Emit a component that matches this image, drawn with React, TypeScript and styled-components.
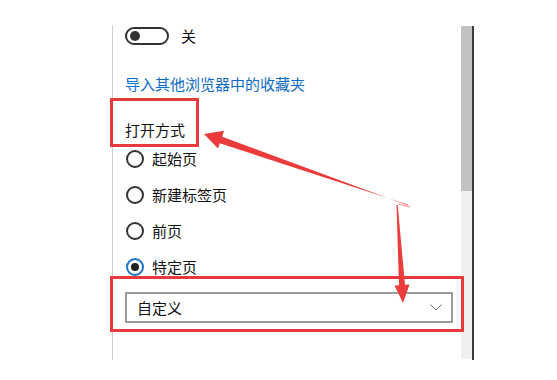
import React from "react";
import styled, { createGlobalStyle } from "styled-components";

const Global = createGlobalStyle`
  html, body { margin: 0; padding: 0; background: #ffffff; }
  body { font-family: "Noto Sans CJK SC", "Microsoft YaHei", sans-serif; color: #000; }
`;

const Page = styled.div`
  position: relative;
  width: 557px;
  height: 380px;
  overflow: hidden;
  background: #fff;
`;

const Layout = styled.div`
  display: flex;
  align-items: flex-start;
  padding: 25px 0 0 112px;
`;

const Panel = styled.div`
  box-sizing: border-box;
  width: 349px;
  height: 335px;
  border-left: 1px solid #cfcfcf;
  padding-left: 12px;
  display: flex;
  flex-direction: column;
`;

const ToggleRow = styled.div`
  display: flex;
  align-items: center;
  margin-top: 2px;
  height: 18px;
`;

const Toggle = styled.div`
  box-sizing: border-box;
  width: 44px;
  height: 18px;
  border: 2px solid #333;
  border-radius: 9px;
  display: flex;
  align-items: center;
  padding-left: 3px;
`;

const Knob = styled.div`
  width: 10px;
  height: 10px;
  border-radius: 50%;
  background: #333;
`;

const Text = styled.span`
  font-size: 15px;
  line-height: 20px;
  color: #111;
  white-space: nowrap;
`;

const ToggleLabel = styled(Text)`
  margin-left: 12px;
`;

const Link = styled.div`
  margin-top: 29px;
  font-size: 15px;
  line-height: 20px;
  color: #0a6cc4;
  white-space: nowrap;
`;

const Heading = styled.div`
  margin-top: 26px;
  font-size: 15px;
  line-height: 20px;
  color: #111;
`;

const RadioGroup = styled.div`
  display: flex;
  flex-direction: column;
  margin-top: 1px;
`;

const RadioRow = styled.div`
  display: flex;
  align-items: center;
  height: 36px;
`;

const RadioCircle = styled.div<{ $checked?: boolean }>`
  box-sizing: border-box;
  width: 18px;
  height: 18px;
  margin-left: 1px;
  border-radius: 50%;
  border: 2px solid ${(p) => (p.$checked ? "#1a73c8" : "#333")};
  display: flex;
  align-items: center;
  justify-content: center;
`;

const RadioDot = styled.div`
  width: 8px;
  height: 8px;
  border-radius: 50%;
  background: #222;
`;

const RadioLabel = styled(Text)`
  margin-left: 8px;
`;

const Select = styled.div`
  box-sizing: border-box;
  margin-top: 7px;
  width: 328px;
  height: 31px;
  border: 2px solid #9a9a9a;
  display: flex;
  align-items: center;
  justify-content: space-between;
  padding: 0 9px 0 10px;
`;

const Scrollbar = styled.div`
  margin-top: 1px;
  width: 11px;
  height: 333px;
  background: #f0f0f0;
  display: flex;
  flex-direction: column;
`;

const Thumb = styled.div`
  height: 165px;
  background: #c2c2c2;
`;

const Edge = styled.div`
  margin-top: 1px;
  width: 2px;
  height: 334px;
  background: #3a3a3a;
`;

const Frame = styled.div<{ $x: number; $y: number; $w: number; $h: number }>`
  position: absolute;
  box-sizing: border-box;
  left: ${(p) => p.$x}px;
  top: ${(p) => p.$y}px;
  width: ${(p) => p.$w}px;
  height: ${(p) => p.$h}px;
  border: 3px solid #e8393c;
  pointer-events: none;
`;

const Overlay = styled.svg`
  position: absolute;
  left: 0;
  top: 0;
  width: 557px;
  height: 380px;
  pointer-events: none;
`;

const options = [
  { label: "起始页", checked: false },
  { label: "新建标签页", checked: false },
  { label: "前页", checked: false },
  { label: "特定页", checked: true },
];

export default function App() {
  return (
    <Page>
      <Global />
      <Layout>
        <Panel>
          <ToggleRow>
            <Toggle>
              <Knob />
            </Toggle>
            <ToggleLabel>关</ToggleLabel>
          </ToggleRow>
          <Link>导入其他浏览器中的收藏夹</Link>
          <Heading>打开方式</Heading>
          <RadioGroup>
            {options.map((o) => (
              <RadioRow key={o.label}>
                <RadioCircle $checked={o.checked}>{o.checked && <RadioDot />}</RadioCircle>
                <RadioLabel>{o.label}</RadioLabel>
              </RadioRow>
            ))}
          </RadioGroup>
          <Select>
            <Text>自定义</Text>
            <svg width="12" height="7" viewBox="0 0 12 7">
              <path d="M0.5 0.5 L6 6 L11.5 0.5" fill="none" stroke="#666" strokeWidth="1" />
            </svg>
          </Select>
        </Panel>
        <Scrollbar>
          <Thumb />
        </Scrollbar>
        <Edge />
      </Layout>
      <Frame $x={110} $y={98} $w={89} $h={49} />
      <Frame $x={110} $y={276} $w={354} $h={56} />
      <Overlay viewBox="0 0 557 380">
        <polygon
          fill="#ec3b3b"
          points="408,205.6 222.2,136.7 224,130.8 204,134 218,148.6 219.8,143.3 407.6,204.4"
        />
        <line x1="398" y1="204" x2="410" y2="207" stroke="#ec6b6b" strokeWidth="0.8" />
        <polygon
          fill="#ec3b3b"
          points="396.5,205 399,285.2 394.5,285.4 403,303 409.5,284.6 405,284.8 397.7,205"
        />
      </Overlay>
    </Page>
  );
}
